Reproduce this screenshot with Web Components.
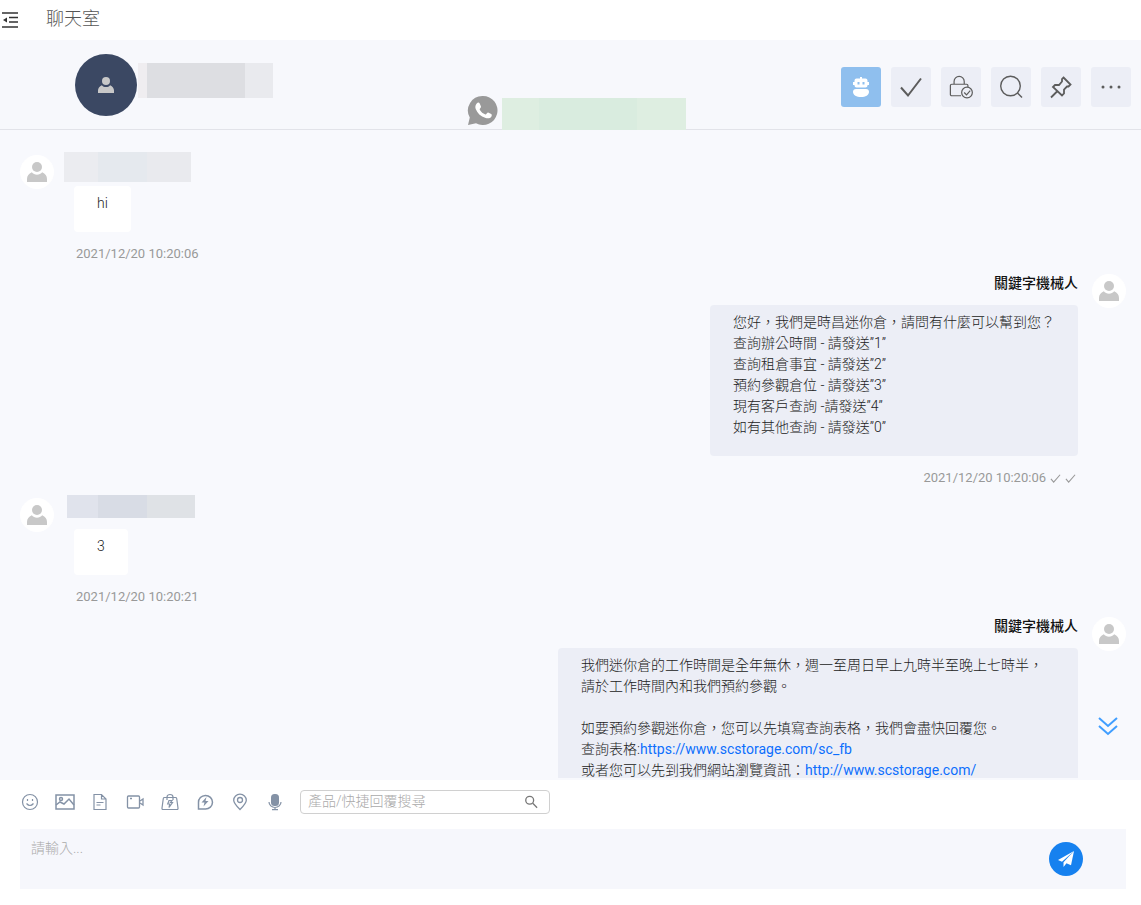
<!DOCTYPE html>
<html lang="zh-Hant">
<head>
<meta charset="utf-8">
<meta name="viewport" content="width=device-width, initial-scale=1">
<title>聊天室</title>
<style>
    html, body {
        height: 100%;
        margin: 0;
    }
    body {
        background: #fff;
        color: #222;
        font: 14px/21px Roboto, "Noto Sans CJK TC", sans-serif;
    }
</style>
</head>
<body>
<chat-room>
    <chat-title slot="title">聊天室</chat-title>
    <contact-bar slot="contact">
        <masked-text slot="name" style="--w: 135px; --h: 35px; --mask: linear-gradient(90deg, #efedf0 9px, #dddee2 9px 107px, #e9eaee 107px)"></masked-text>
        <masked-text slot="channel" style="--w: 184px; --h: 32px; --mask: linear-gradient(90deg, #deeee1 37px, #d9ecdf 37px 135px, #deeee1 135px)"></masked-text>
        <tool-button slot="tools" icon="robot" label="機械人" active></tool-button>
        <tool-button slot="tools" icon="check" label="完成"></tool-button>
        <tool-button slot="tools" icon="lock" label="鎖定"></tool-button>
        <tool-button slot="tools" icon="search" label="搜尋"></tool-button>
        <tool-button slot="tools" icon="pin" label="置頂"></tool-button>
        <tool-button slot="tools" icon="more" label="更多"></tool-button>
    </contact-bar>
    <message-list slot="messages">
        <chat-message time="2021/12/20 10:20:06">
            <masked-text slot="name" style="--w: 127px; --h: 30px; --mask: linear-gradient(90deg, #ebecf0 34px, #e5e9ee 34px 83px, #e9eaee 83px)"></masked-text>hi</chat-message>
        <chat-message time="2021/12/20 10:20:06" outgoing>
            <span slot="name">關鍵字機械人</span>您好，我們是時昌迷你倉，請問有什麼可以幫到您？
查詢辦公時間 - 請發送”1”
查詢租倉事宜 - 請發送”2”
預約參觀倉位 - 請發送”3”
現有客戶查詢 -請發送”4”
如有其他查詢 - 請發送”0”</chat-message>
        <chat-message time="2021/12/20 10:20:21">
            <masked-text slot="name" style="--w: 128px; --h: 23px; --inset: 3px; --mask: linear-gradient(90deg, #e0e3ec 31px, #d8dce5 31px 80px, #dfe2e6 80px)"></masked-text>3</chat-message>
        <chat-message time="2021/12/20 10:20:22" outgoing>
            <span slot="name">關鍵字機械人</span>我們迷你倉的工作時間是全年無休，週一至周日早上九時半至晚上七時半，請於工作時間內和我們預約參觀。<br><br>如要預約參觀迷你倉，您可以先填寫查詢表格，我們會盡快回覆您。<br>查詢表格:<a href="https://www.scstorage.com/sc_fb">https://www.scstorage.com/sc_fb</a><br>或者您可以先到我們網站瀏覽資訊：<a href="http://www.scstorage.com/">http://www.scstorage.com/</a></chat-message>
    </message-list>
    <message-composer slot="composer"></message-composer>
</chat-room>

<script>
const ICONS = {
    menu: '<svg viewBox="0 0 16 16" fill="none" stroke="currentColor" stroke-width="1.5"><path d="M0 1h16M7 5.5h9M7 10h9M0 15h16"/><path d="M1 8l4-2.5v5z" fill="currentColor" stroke="none"/></svg>',
    user: '<svg viewBox="0 0 20 20" fill="currentColor"><circle cx="10" cy="5" r="5"/><path d="M4.8 10.3C7 13.4 13 13.4 15.2 10.3C18.2 11.5 20 14 20 17v3H0v-3c0-3 1.8-5.5 4.8-6.7z"/></svg>',
    whatsapp: '<svg viewBox="0 0 31 31"><path d="M16 1a14.5 14.5 0 1 1-7 27.2L1 30l1.8-7.4A14.5 14.5 0 0 1 16 1z" fill="#999"/><path d="M9.7 8.5c1-1.2 2.4-1.2 3 0l1.2 2.8c.3.8-.2 1.5-1 2.4-.4.5-.2.9.2 1.5 1.2 1.9 2.7 3.2 4.9 4.1.6.3 1 .2 1.4-.3.9-1.1 1.4-1.7 2.2-1.3l2.6 1.3c.8.5.7 1.7.1 2.7-1 1.6-3.4 2-5.6 1.3-5.2-1.6-8.5-5-10-9-.7-2-.3-4.2 1-5.5z" fill="#fff"/></svg>',
    robot: '<svg viewBox="0 0 22 22" fill="#fff"><path d="M10 1h2v3h-2zM3 6h2v3H3zM17 6h2v3h-2z"/><path fill-rule="evenodd" d="M6.5 2.5h9q2 0 2 2v5q0 2-2 2h-9q-2 0-2-2v-5q0-2 2-2zM7.5 6v2.5h2V6zM12.5 6v2.5h2V6z"/><path d="M6 13h10q3 0 3 3c0 3-3.5 5-8 5s-8-2-8-5q0-3 3-3z"/></svg>',
    check: '<svg viewBox="0 0 24 24" fill="none" stroke="currentColor" stroke-width="2"><path d="M2 12.5l7 8L22 3.5"/></svg>',
    lock: '<svg viewBox="0 0 26 26" fill="none" stroke="currentColor" stroke-width="1.3"><path d="M13 22.5H3q-1.5 0-1.5-1.5V11.5q0-1.5 1.5-1.5h16q1.5 0 1.5 1.5V13M5.5 10V7a5.5 5.5 0 0 1 11 0v3"/><circle cx="19.5" cy="19" r="5.8"/><path d="M16.5 19l2.5 2.5 4-4.5"/></svg>',
    search: '<svg viewBox="0 0 24 24" fill="none" stroke="currentColor" stroke-width="1.4"><circle cx="11.5" cy="11" r="9.8"/><path d="M18.5 18l4.5 4.5"/></svg>',
    pin: '<svg viewBox="0 0 24 24" fill="none" stroke="currentColor" stroke-width="1.8"><path d="M14.5 2.5l7 7-2 2h-1.5L15 14.5v4l-2 2L4 12l2-2h4L13 6.5V4zM8.5 16l-6.5 6.5"/></svg>',
    more: '<svg viewBox="0 0 24 24" fill="currentColor"><circle cx="4" cy="12" r="1.5"/><circle cx="12" cy="12" r="1.5"/><circle cx="20" cy="12" r="1.5"/></svg>',
    tick: '<svg viewBox="0 0 12 12" fill="none" stroke="currentColor" stroke-width="1.2"><path d="M1 7.5l3 3.5L11 3"/></svg>',
    down: '<svg viewBox="0 0 22 22" fill="none" stroke="currentColor" stroke-width="2"><path d="M2 3l9 8 9-8M2 11l9 8 9-8"/></svg>',
    smile: '<svg viewBox="0 0 18 18" fill="none" stroke="currentColor" stroke-width="1.2"><circle cx="9" cy="9" r="7.5"/><path d="M5.5 10.5q3.5 4 7 0M6.5 6v2M11.5 6v2"/></svg>',
    image: '<svg viewBox="0 0 20 18" fill="none" stroke="currentColor" stroke-width="1.5"><rect x="1" y="2" width="18" height="14"/><circle cx="6" cy="6" r="1.5"/><path d="M1 12l4-3 4 2 5-5 5 6"/></svg>',
    file: '<svg viewBox="0 0 18 18" fill="none" stroke="currentColor" stroke-width="1.2"><path d="M3 1.5h7.5L15 6v10.5H3zM10.5 1.5V6H15M5.5 9.5h7M5.5 12h4"/></svg>',
    video: '<svg viewBox="0 0 18 18" fill="none" stroke="currentColor" stroke-width="1.3"><rect x="1.5" y="3" width="12" height="12" rx="1"/><path d="M14 8l3-2v6l-3-2M4 5.5h2"/></svg>',
    bag: '<svg viewBox="0 0 18 18" fill="none" stroke="currentColor" stroke-width="1.2"><path d="M3.5 4.5h11q1 0 1.2 1L17 15q.2 1.5-1 1.5H2Q.8 16.5 1 15l1.3-9.5q.2-1 1.2-1zM6 7V4a3 2.5 0 0 1 6 0v3"/><path d="M11 7.5H8L6.7 11h2L8 14.5l3.5-5H9.5z"/></svg>',
    quick: '<svg viewBox="0 0 18 18" fill="none" stroke="currentColor" stroke-width="1.5"><path d="M2.5 16v-6.5A7 6.8 0 1 1 9.3 16z"/><path d="M10.5 4L5.5 9.5h3L7.5 13.5 12.5 8h-3z" fill="currentColor" stroke="none"/></svg>',
    place: '<svg viewBox="0 0 18 18" fill="none" stroke="currentColor" stroke-width="1.3"><path d="M9 16.5C5 12.5 2.7 10 2.7 7.2a6.3 6 0 0 1 12.6 0C15.3 10 13 12.5 9 16.5z"/><circle cx="9" cy="7" r="2.5"/></svg>',
    mic: '<svg viewBox="0 0 18 18" fill="none" stroke="currentColor" stroke-width="1.2"><rect x="5" y="1" width="8" height="12" rx="3.5" fill="currentColor" stroke="none"/><path d="M3 9a6 5.5 0 0 0 12 0M9 14.5v2M6 16.7h6"/></svg>',
    find: '<svg viewBox="0 0 16 16" fill="none" stroke="currentColor" stroke-width="1.5"><circle cx="6.5" cy="6" r="4.5"/><path d="M10 9.5l5 5"/></svg>',
    send: '<svg viewBox="0 0 18 18" fill="#fff"><path d="M17 1L1 10l4 1.7zM17 1L6.5 12.2V17l2.6-3.3z"/><path d="M17 1L8.2 12.7l5.8 2.6z"/></svg>'
};

/**
 * Attach an open shadow root and fill it.
 * @param {HTMLElement} host
 * @param {string} html
 */
function render(host, html) {
    host.attachShadow({ mode: 'open' }).innerHTML = html;
}

class AppIcon extends HTMLElement {
    constructor() {
        super();
        render(this, `
        <style>
            :host {
                display: inline-flex;
                flex: none;
                width: var(--icon-width, var(--icon-size, 18px));
                height: var(--icon-size, 18px);
            }
            svg {
                width: 100%;
                height: 100%;
            }
        </style>
        ${ICONS[this.getAttribute('name')]}
        `);
    }
}

// Hidden personal data, shown as a shaded bar
class MaskedText extends HTMLElement {
    constructor() {
        super();
        render(this, `
        <style>
            :host {
                display: block;
                width: var(--w);
                height: var(--h);
                margin-left: var(--inset, 0);
                background: var(--mask);
            }
        </style>
        `);
    }
}

class UserAvatar extends HTMLElement {
    constructor() {
        super();
        render(this, `
        <style>
            :host {
                display: flex;
                flex: none;
                align-items: center;
                justify-content: center;
                width: 34px;
                height: 34px;
                border-radius: 50%;
                background: #fff;
                color: #c8c8c8;
                --icon-size: 20px;
            }
            :host([large]) {
                width: 62px;
                height: 62px;
                background: #3b4863;
                --icon-size: 16px;
            }
        </style>
        <app-icon name="user"></app-icon>
        `);
    }
}

class ChatRoom extends HTMLElement {
    constructor() {
        super();
        render(this, `
        <style>
            :host {
                display: flex;
                flex-direction: column;
                height: 100vh;
            }
            main {
                flex: 1;
                min-height: 0;
            }
        </style>
        <slot name="title"></slot>
        <slot name="contact"></slot>
        <main><slot name="messages"></slot></main>
        <slot name="composer"></slot>
        `);
    }
}

class ChatTitle extends HTMLElement {
    constructor() {
        super();
        render(this, `
        <style>
            :host {
                display: flex;
                align-items: center;
                flex: none;
                height: 40px;
                gap: 28px;
                padding-left: 2px;
                box-sizing: border-box;
            }
            button {
                display: flex;
                padding: 0;
                border: 0;
                background: none;
                color: #333;
                cursor: pointer;
                --icon-size: 16px;
            }
            h1 {
                margin: 0 0 2px;
                color: #555;
                font-size: 18px;
                font-weight: 300;
                line-height: 24px;
            }
        </style>
        <button type="button" aria-label="收合選單"><app-icon name="menu"></app-icon></button>
        <h1><slot></slot></h1>
        `);
    }
}

class ContactBar extends HTMLElement {
    constructor() {
        super();
        render(this, `
        <style>
            :host {
                display: grid;
                flex: none;
                grid-template-columns: 1fr auto 1fr;
                height: 90px;
                box-sizing: border-box;
                border-bottom: 1px solid #e2e3e9;
                background: #f7f8fc;
            }
            .contact {
                display: flex;
                gap: 1px;
                padding: 14px 0 0 75px;
            }
            .contact slot {
                display: block;
                padding-top: 9px;
            }
            .channel {
                display: flex;
                align-items: flex-end;
                gap: 4px;
                padding-left: 12px;
                margin-bottom: -1px;
            }
            .channel app-icon {
                --icon-size: 31px;
                margin-bottom: 4px;
            }
            .tools {
                display: flex;
                justify-content: flex-end;
                gap: 10px;
                padding: 27px 10px 0 0;
            }
        </style>
        <div class="contact">
            <user-avatar large></user-avatar>
            <slot name="name"></slot>
        </div>
        <div class="channel">
            <app-icon name="whatsapp"></app-icon>
            <slot name="channel"></slot>
        </div>
        <div class="tools"><slot name="tools"></slot></div>
        `);
    }
}

class ToolButton extends HTMLElement {
    constructor() {
        super();
        render(this, `
        <style>
            :host {
                display: block;
                --icon-size: 24px;
            }
            button {
                display: flex;
                align-items: center;
                justify-content: center;
                width: 40px;
                height: 40px;
                padding: 0;
                border: 0;
                border-radius: 3px;
                background: #eceef6;
                color: #5c5c5c;
                cursor: pointer;
            }
            :host([active]) button {
                background: #8fbfee;
                --icon-size: 22px;
            }
        </style>
        <button type="button" aria-label="${this.getAttribute('label')}">
            <app-icon name="${this.getAttribute('icon')}"></app-icon>
        </button>
        `);
    }
}

class MessageList extends HTMLElement {
    constructor() {
        super();
        render(this, `
        <style>
            :host {
                display: block;
                position: relative;
                height: 100%;
                box-sizing: border-box;
                padding-bottom: 2px;
                background: #f8f9fd;
            }
            .scroll {
                height: 100%;
                box-sizing: border-box;
                padding: 22px 15px 0 20px;
                overflow-y: auto;
                scrollbar-width: none;
            }
            button {
                position: absolute;
                right: 22px;
                bottom: 43px;
                display: flex;
                padding: 0;
                border: 0;
                background: none;
                color: #409eff;
                cursor: pointer;
                --icon-size: 22px;
            }
        </style>
        <div class="scroll"><slot></slot></div>
        <button type="button" aria-label="捲到最新訊息"><app-icon name="down"></app-icon></button>
        `);
        this.shadowRoot.querySelector('button').onclick = () => {
            const scroll = this.shadowRoot.querySelector('.scroll');
            scroll.scrollTop = scroll.scrollHeight;
        };
    }
}

class ChatMessage extends HTMLElement {
    constructor() {
        super();
        const outgoing = this.hasAttribute('outgoing');
        const ticks = '<app-icon name="tick"></app-icon><app-icon name="tick"></app-icon>';
        render(this, `
        <style>
            :host {
                display: flex;
                gap: 10px;
            }
            :host([outgoing]) {
                flex-direction: row-reverse;
                gap: 14px;
            }
            user-avatar {
                margin-top: 3px;
            }
            .body {
                display: flex;
                flex-direction: column;
                align-items: flex-start;
                min-width: 0;
            }
            :host([outgoing]) .body {
                align-items: flex-end;
            }
            .name {
                height: 34px;
                color: #111;
                font-size: 14px;
                font-weight: 500;
                line-height: 24px;
            }
            .bubble {
                max-width: 520px;
                box-sizing: border-box;
                margin-left: 10px;
                padding: 7px 23px 18px;
                border-radius: 4px;
                background: #fff;
                font-weight: 300;
                white-space: pre-wrap;
            }
            :host([outgoing]) .bubble {
                margin-left: 0;
                background: #eceef6;
            }
            ::slotted(a) {
                color: #0d6efd;
                font-weight: 400;
                text-decoration: none;
            }
            .meta {
                display: flex;
                align-items: center;
                gap: 4px;
                height: 17px;
                padding: 13px 2px 9px 12px;
                color: #999;
                font-size: 13px;
                line-height: 17px;
                --icon-size: 11px;
            }
        </style>
        <user-avatar></user-avatar>
        <div class="body">
            <div class="name"><slot name="name"></slot></div>
            <div class="bubble"><slot></slot></div>
            <div class="meta"><time>${this.getAttribute('time')}</time>${outgoing ? ticks : ''}</div>
        </div>
        `);
        // drop the source indentation around the slotted name
        const first = this.firstChild;
        if (first && first.nodeType === Node.TEXT_NODE && !first.data.trim()) {
            first.remove();
        }
    }
}

class MessageComposer extends HTMLElement {
    constructor() {
        super();
        const tools = [
            ['smile', '表情'], ['image', '圖片'], ['file', '檔案'], ['video', '影片'],
            ['bag', '產品'], ['quick', '快捷回覆'], ['place', '位置'], ['mic', '錄音']
        ];
        render(this, `
        <style>
            :host {
                display: block;
                flex: none;
                padding: 10px 15px 16px 20px;
                background: #fff;
            }
            button {
                display: flex;
                align-items: center;
                justify-content: center;
                padding: 0;
                border: 0;
                background: none;
                cursor: pointer;
            }
            .toolbar {
                display: flex;
                align-items: center;
                gap: 15px;
                margin-bottom: 15px;
                color: #8492a6;
            }
            .toolbar > button {
                width: 20px;
                height: 20px;
                color: inherit;
            }
            .image {
                --icon-width: 20px;
            }
            .search {
                display: flex;
                align-items: center;
                width: 250px;
                height: 24px;
                box-sizing: border-box;
                padding: 0 11px 0 7px;
                border: 1px solid #d0d0d0;
                border-radius: 4px;
            }
            .search button {
                color: #777;
                --icon-size: 14px;
            }
            input, textarea {
                flex: 1;
                min-width: 0;
                padding: 0 0 1px;
                border: 0;
                outline: 0;
                background: none;
                color: #333;
                font: inherit;
                font-weight: 300;
            }
            ::placeholder {
                color: #aaa;
                opacity: 1;
            }
            .editor {
                display: flex;
                align-items: center;
                gap: 20px;
                height: 60px;
                padding: 0 43px 0 11px;
                background: #f6f7fc;
            }
            textarea {
                align-self: stretch;
                padding-top: 9px;
                resize: none;
            }
            .send {
                width: 34px;
                height: 34px;
                border-radius: 50%;
                background: #1681ef;
            }
        </style>
        <div class="toolbar">
            ${tools.map(([icon, label]) => `<button type="button" class="${icon}" aria-label="${label}"><app-icon name="${icon}"></app-icon></button>`).join('')}
            <div class="search">
                <input type="text" aria-label="產品/快捷回覆搜尋" placeholder="產品/快捷回覆搜尋">
                <button type="button" aria-label="搜尋"><app-icon name="find"></app-icon></button>
            </div>
        </div>
        <div class="editor">
            <textarea aria-label="訊息" placeholder="請輸入..."></textarea>
            <button type="button" class="send" aria-label="發送"><app-icon name="send"></app-icon></button>
        </div>
        `);
    }
}

customElements.define('app-icon', AppIcon);
customElements.define('masked-text', MaskedText);
customElements.define('user-avatar', UserAvatar);
customElements.define('chat-room', ChatRoom);
customElements.define('chat-title', ChatTitle);
customElements.define('contact-bar', ContactBar);
customElements.define('tool-button', ToolButton);
customElements.define('message-list', MessageList);
customElements.define('chat-message', ChatMessage);
customElements.define('message-composer', MessageComposer);
</script>
</body>
</html>
